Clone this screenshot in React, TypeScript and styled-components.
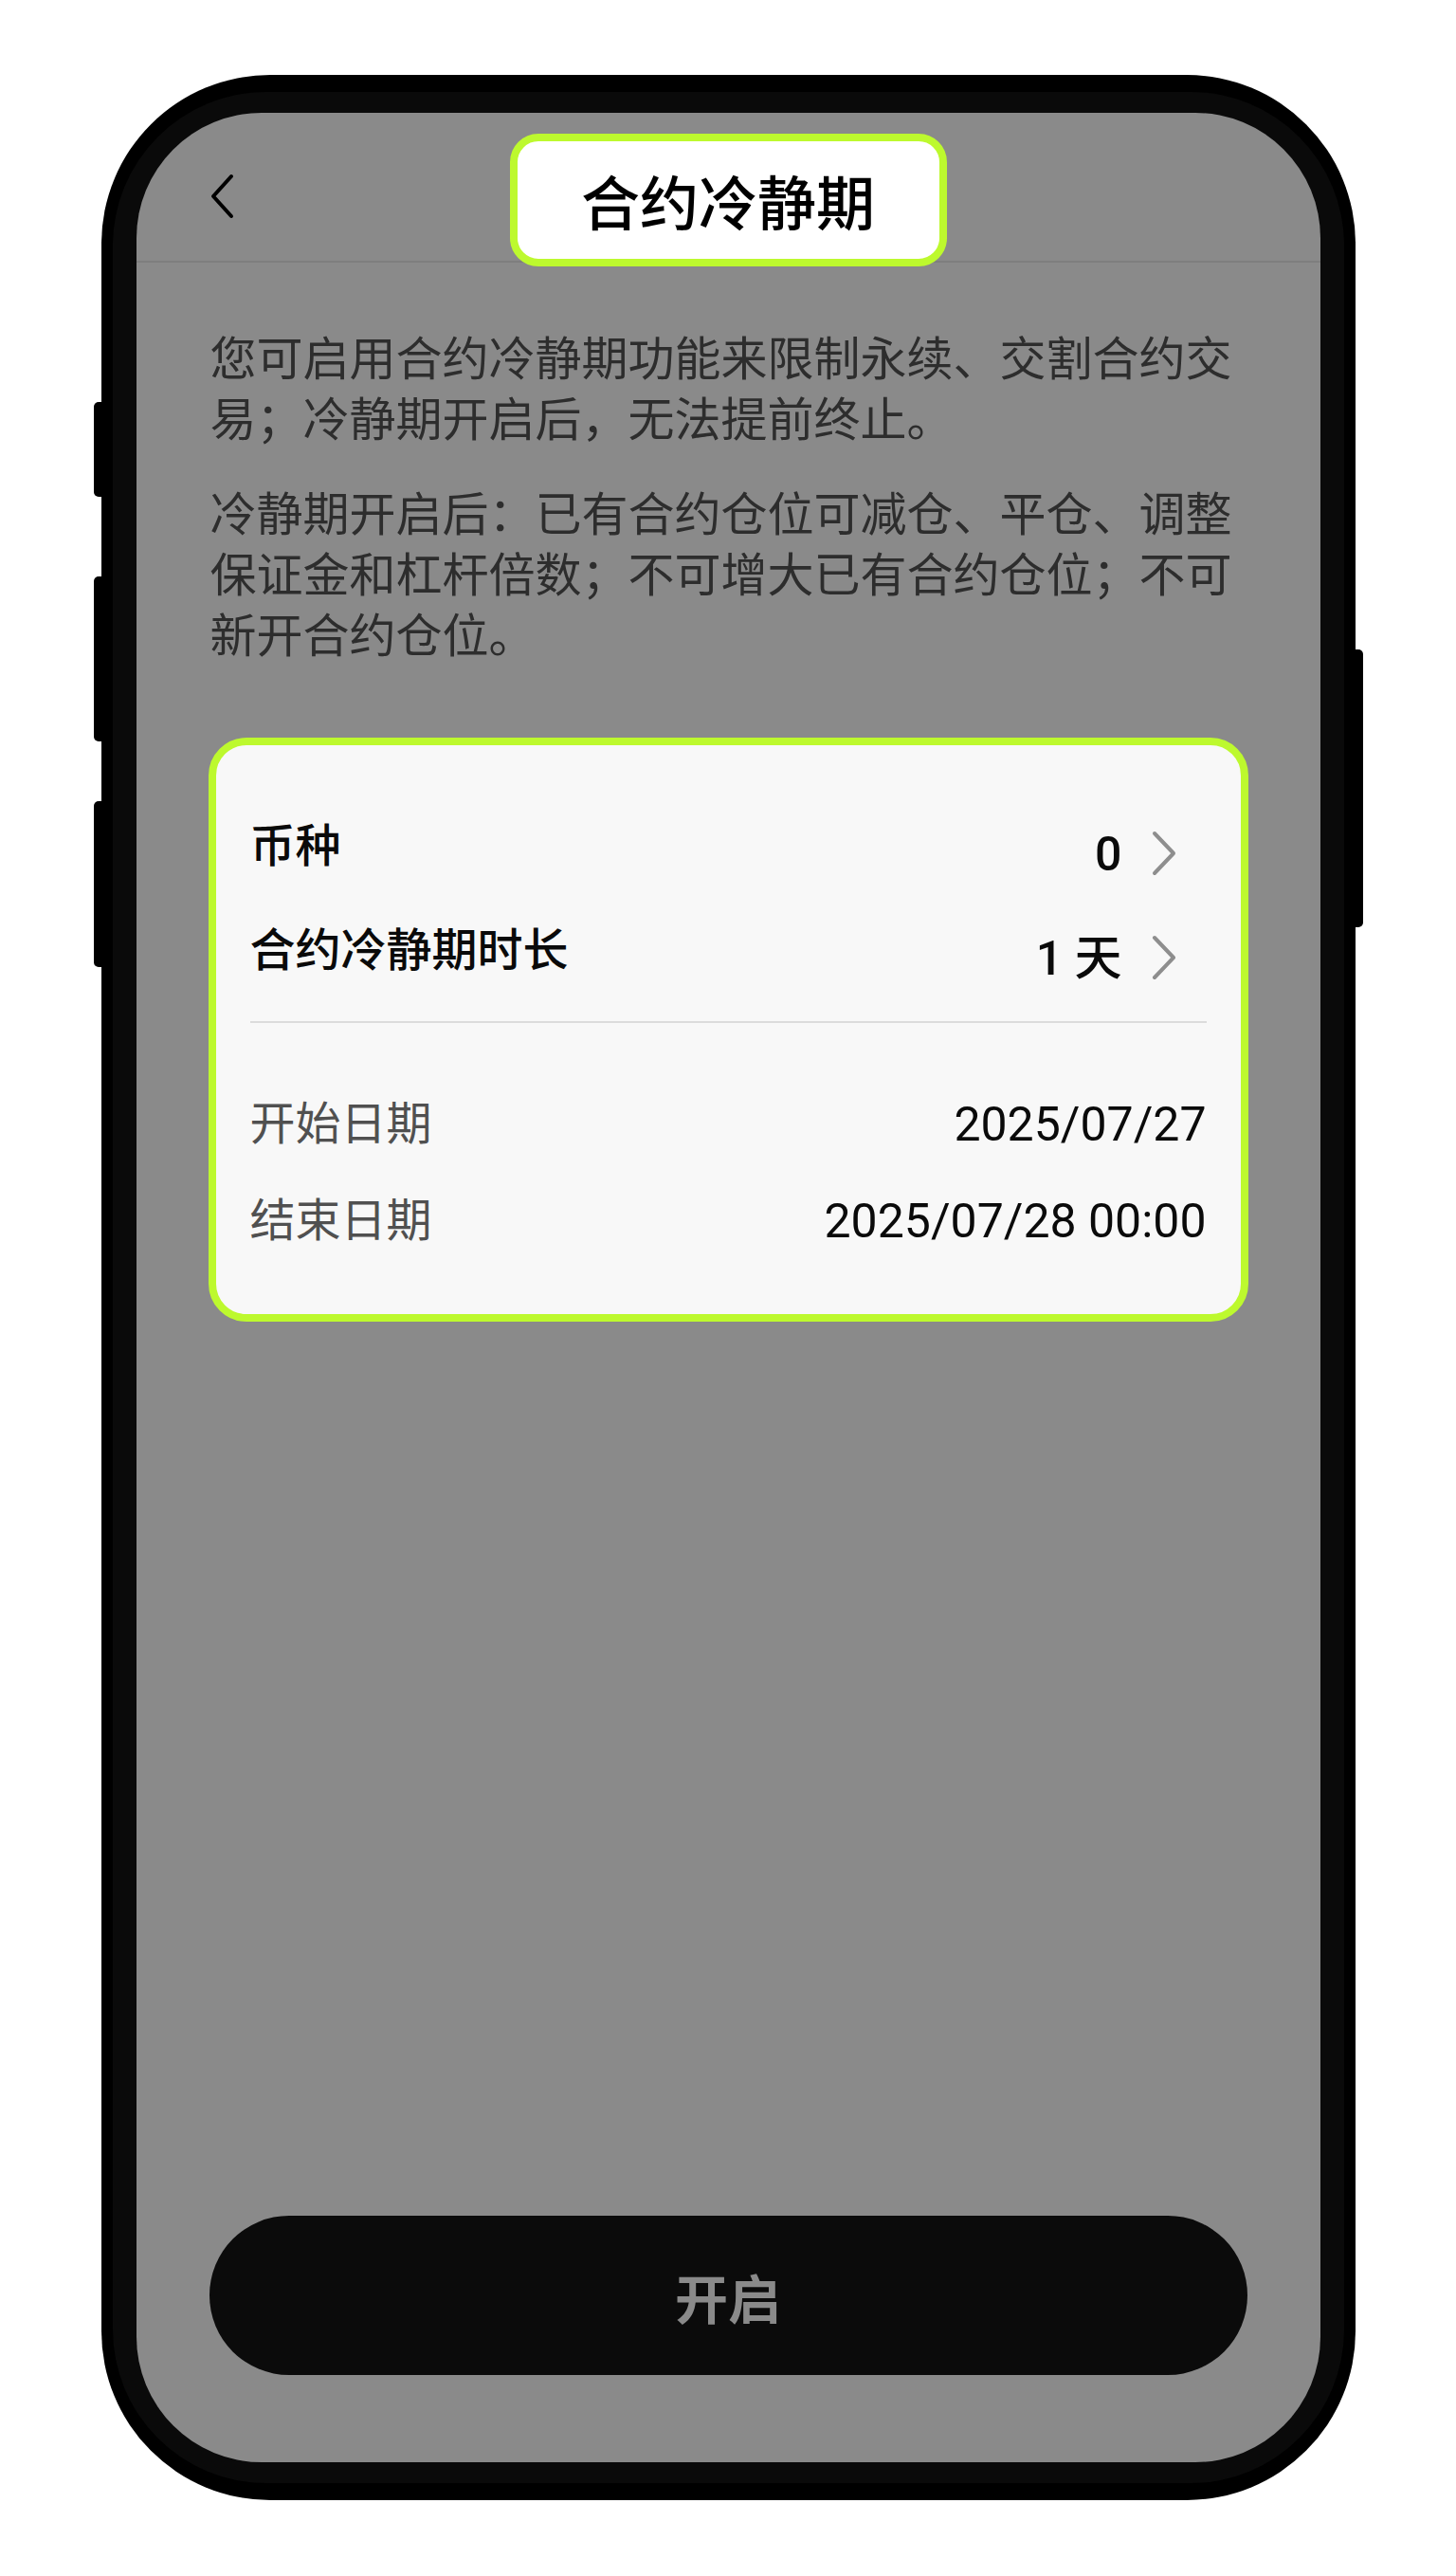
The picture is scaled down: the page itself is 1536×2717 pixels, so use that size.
import React from "react";
import styled, { createGlobalStyle } from "styled-components";

const GlobalStyle = createGlobalStyle`
  html, body {
    margin: 0;
    padding: 0;
    background: #ffffff;
  }
  body {
    font-family: "Roboto", "Noto Sans CJK SC", sans-serif;
  }
  * {
    box-sizing: border-box;
  }
`;

const GREEN = "#bdf92e";

interface InfoRowProps {
  label: string;
  value: string;
}

const App = () => {
  return (
    <Page>
      <GlobalStyle />
      <Phone>
        <SideKey side="left" top={345} length={100} />
        <SideKey side="left" top={529} length={174} />
        <SideKey side="left" top={766} length={175} />
        <SideKey side="right" top={606} length={293} />
        <Bezel>
          <Screen>
            <Header>
              <BackButton aria-label="返回">
                <svg width="26" height="48" viewBox="0 0 26 48" fill="none">
                  <polyline
                    points="22,3 3,24 22,45"
                    stroke="#000"
                    strokeWidth="4"
                    strokeLinecap="round"
                    strokeLinejoin="round"
                  />
                </svg>
              </BackButton>
              <TitleBox>合约冷静期</TitleBox>
              <span />
            </Header>

            <Content>
              <Paragraph>
                您可启用合约冷静期功能来限制永续、交割合约交易；冷静期开启后，无法提前终止。
              </Paragraph>
              <Paragraph>
                冷静期开启后：已有合约仓位可减仓、平仓、调整保证金和杠杆倍数；不可增大已有合约仓位；不可新开合约仓位。
              </Paragraph>

              <Card>
                <SelectRow>
                  <SelectLabel>币种</SelectLabel>
                  <SelectValue>
                    0
                    <Chevron />
                  </SelectValue>
                </SelectRow>
                <SelectRow>
                  <SelectLabel>合约冷静期时长</SelectLabel>
                  <SelectValue>
                    1 天
                    <Chevron />
                  </SelectValue>
                </SelectRow>
                <Divider />
                <InfoRow label="开始日期" value="2025/07/27" />
                <InfoRow label="结束日期" value="2025/07/28 00:00" />
              </Card>
            </Content>

            <Footer>
              <StartButton>开启</StartButton>
            </Footer>
          </Screen>
        </Bezel>
      </Phone>
    </Page>
  );
};

const Chevron = () => (
  <ChevronIcon width="28" height="48" viewBox="0 0 28 48" fill="none">
    <polyline
      points="4,3 24,24 4,45"
      stroke="#8e8e8e"
      strokeWidth="4"
      strokeLinecap="round"
      strokeLinejoin="round"
    />
  </ChevronIcon>
);

const InfoRow = ({ label, value }: InfoRowProps) => (
  <DateRow>
    <DateLabel>{label}</DateLabel>
    <DateValue>{value}</DateValue>
  </DateRow>
);

export default App;

const Page = styled.div`
  min-height: 2717px;
  padding-top: 79px;
  display: flex;
  justify-content: center;
  align-items: flex-start;
`;

const Phone = styled.div`
  position: relative;
  width: 1323px;
  height: 2558px;
  padding: 18px 12px;
  background: #000;
  border-radius: 178px;
`;

const SideKey = styled.div<{ side: "left" | "right"; top: number; length: number }>`
  position: absolute;
  top: ${({ top }) => top}px;
  ${({ side }) => (side === "left" ? "left: -8px;" : "right: -8px;")}
  width: 14px;
  height: ${({ length }) => length}px;
  background: #000;
  border-radius: 5px;
`;

const Bezel = styled.div`
  height: 100%;
  padding: 22px 25px;
  background: #0a0a0a;
  border-radius: 162px;
  display: flex;
`;

const Screen = styled.div`
  flex: 1;
  display: flex;
  flex-direction: column;
  background: #8a8a8a;
  border-radius: 132px;
  overflow: hidden;
`;

const Header = styled.header`
  height: 158px;
  flex-shrink: 0;
  padding: 22px 80px 0;
  border-bottom: 2px solid #7e7e7e;
  display: grid;
  grid-template-columns: 1fr auto 1fr;
  align-items: start;
`;

const BackButton = styled.button`
  justify-self: start;
  margin-top: 42px;
  margin-left: -2px;
  padding: 0;
  border: none;
  background: none;
  display: flex;
  cursor: pointer;
`;

const TitleBox = styled.h1`
  margin: 0;
  width: 461px;
  height: 140px;
  border: 8px solid ${GREEN};
  border-radius: 30px;
  background: #fff;
  display: flex;
  align-items: center;
  justify-content: center;
  font-size: 62px;
  font-weight: 500;
  color: #000;
`;

const Content = styled.main`
  padding: 66px 76px 0;
`;

const Paragraph = styled.p`
  margin: 0 0 36px;
  padding: 0 2px;
  font-family: "Noto Sans CJK SC", sans-serif;
  font-size: 49px;
  line-height: 64px;
  color: #2d2d2d;
`;

const Card = styled.section`
  margin-top: 79px;
  padding: 79px 36px 70px;
  border: 8px solid ${GREEN};
  border-radius: 40px;
  background: #f8f8f8;
`;

const SelectRow = styled.div`
  display: flex;
  justify-content: space-between;
  align-items: flex-start;
  height: 56px;
  & + & {
    margin-top: 54px;
  }
`;

const SelectLabel = styled.span`
  font-size: 48px;
  line-height: 56px;
  font-weight: 500;
  color: #0a0a0a;
`;

const SelectValue = styled.span`
  display: flex;
  align-items: center;
  gap: 30px;
  margin-top: 8px;
  margin-right: 31px;
  font-size: 50px;
  line-height: 56px;
  font-weight: 500;
  color: #0a0a0a;
`;

const ChevronIcon = styled.svg`
  display: block;
  margin-top: -2px;
`;

const Divider = styled.hr`
  margin: 46px 0 79px;
  border: none;
  height: 2px;
  background: #dcdcdc;
`;

const DateRow = styled.div`
  display: flex;
  justify-content: space-between;
  align-items: center;
  height: 56px;
  & + & {
    margin-top: 46px;
  }
`;

const DateLabel = styled.span`
  font-size: 48px;
  line-height: 56px;
  color: #505050;
`;

const DateValue = styled.span`
  font-size: 50px;
  line-height: 56px;
  color: #0a0a0a;
`;

const Footer = styled.footer`
  margin-top: auto;
  padding: 0 77px 92px;
`;

const StartButton = styled.button`
  width: 100%;
  height: 168px;
  border: none;
  border-radius: 84px;
  background: #0b0b0b;
  color: #8a8a8a;
  font-family: "Roboto", "Noto Sans CJK SC", sans-serif;
  font-size: 56px;
  font-weight: 700;
  cursor: pointer;
`;
